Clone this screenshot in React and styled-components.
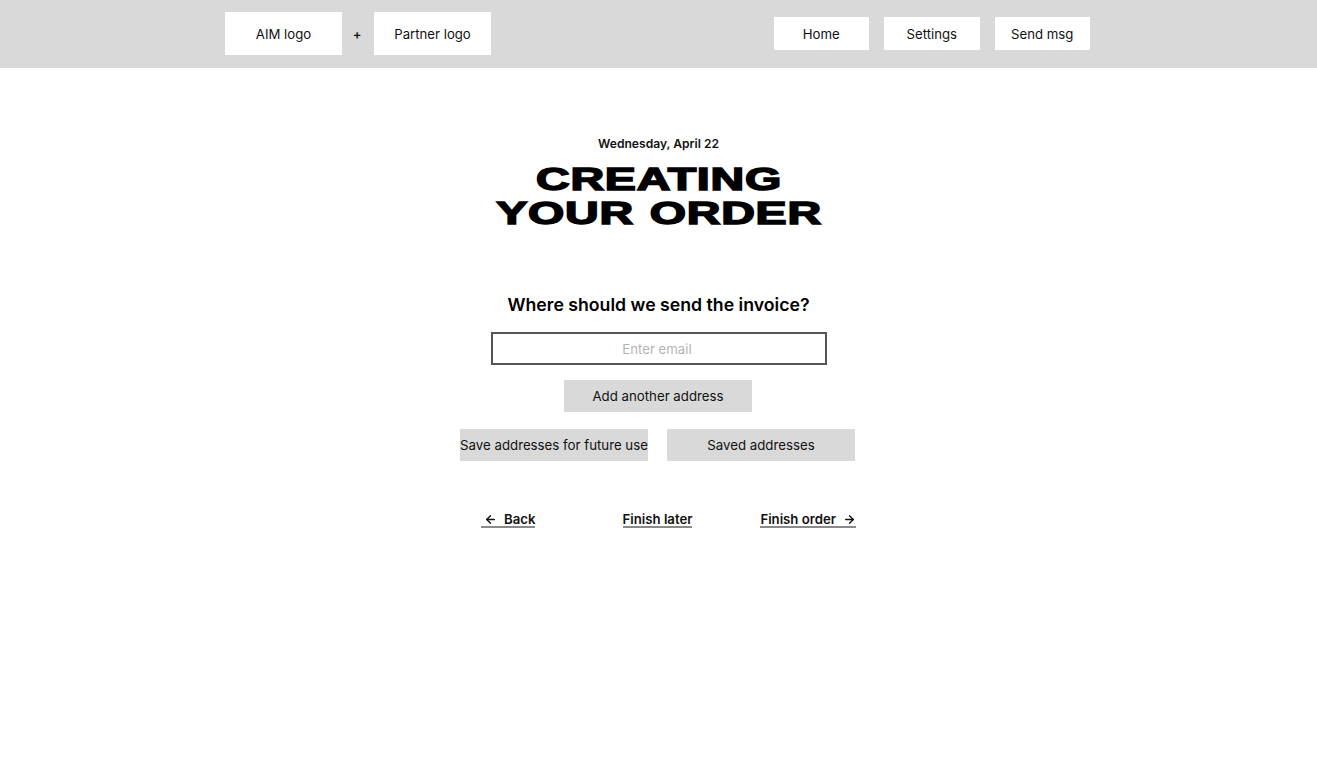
import React from 'react';
import styled, { createGlobalStyle } from 'styled-components';
import { ArrowLeft, ArrowRight } from 'lucide-react';

const GlobalStyle = createGlobalStyle`
  html, body {
    margin: 0;
    padding: 0;
    background: #fff;
    color: #111;
    font-family: Inter, "Liberation Sans", sans-serif;
  }
`;

const Header = styled.header`
  box-sizing: border-box;
  display: flex;
  justify-content: space-between;
  align-items: center;
  height: 68px;
  padding: 0 227px 1px 225px;
  background-color: #d9d9d9;
`;

const LogoGroup = styled.div`
  display: flex;
  align-items: center;
`;

const LogoBox = styled.div`
  display: flex;
  justify-content: center;
  align-items: center;
  width: 117px;
  height: 43px;
  background-color: #fff;
  font-size: 13.2px;
`;

const Plus = styled.span`
  width: 32px;
  padding-right: 2px;
  box-sizing: border-box;
  text-align: center;
  font-size: 13px;
  font-weight: 600;
`;

const Nav = styled.nav`
  display: flex;
  gap: 15px;
`;

const NavButton = styled.div`
  display: flex;
  justify-content: center;
  align-items: center;
  width: 95.5px;
  height: 33px;
  background-color: #fff;
  font-size: 13.2px;
`;

const Main = styled.main`
  display: flex;
  flex-direction: column;
  align-items: center;
  padding: 68px 0 0 0;
`;

const DateLine = styled.div`
  font-size: 12.1px;
  font-weight: 600;
  line-height: 16px;
`;

const Title = styled.h1`
  margin: 10px 0 0 2px;
  font-family: "Liberation Sans", Arial, sans-serif;
  font-size: 31.5px;
  font-weight: 700;
  line-height: 34px;
  letter-spacing: 0.5px;
  word-spacing: 1.5px;
  text-align: center;
  color: #000;
  white-space: nowrap;
  -webkit-text-stroke: 1.5px #000;
  transform: scaleX(1.48);
`;

const Form = styled.section`
  display: flex;
  flex-direction: column;
  align-items: center;
  padding-right: 1px;
`;

const Question = styled.h2`
  margin: 63px 0 0;
  padding-left: 1px;
  font-size: 17.7px;
  font-weight: 600;
  line-height: 24px;
  color: #000;
`;

const EmailInput = styled.input`
  box-sizing: border-box;
  width: 336px;
  height: 33px;
  margin: 15px 0 0 1px;
  padding: 0 3px 0 0;
  border: 2px solid #555;
  background: #fff;
  font-family: inherit;
  font-size: 13.2px;
  text-align: center;
  outline: none;

  &::placeholder {
    color: #b4b4b4;
    opacity: 1;
  }
`;

const GreyButton = styled.button`
  box-sizing: border-box;
  width: 188px;
  height: 32px;
  padding: 0;
  border: none;
  background-color: #d9d9d9;
  color: #111;
  font-family: inherit;
  font-size: 13.25px;
  white-space: nowrap;
`;

const AddButton = styled(GreyButton)`
  margin-top: 15px;
`;

const ButtonRow = styled.div`
  display: flex;
  gap: 19px;
  margin: 17px 0 0 -1px;
`;

const LinkRow = styled.div`
  display: grid;
  grid-template-columns: 1fr auto 1fr;
  width: 395px;
  margin: 51px 0 0 -1px;
`;

const TextLink = styled.a`
  display: inline-flex;
  align-items: center;
  gap: ${(p) => p.$gap || 0}px;
  height: 14px;
  padding: 0 ${(p) => p.$padRight || 0}px 0 ${(p) => p.$padLeft || 0}px;
  border-bottom: 2px solid #8a8a8a;
  font-size: 13.2px;
  font-weight: 600;
  line-height: 15px;
  color: #111;
  justify-self: ${(p) => p.$align || 'center'};
  margin-left: ${(p) => p.$offsetLeft || 0}px;
  margin-right: ${(p) => p.$offsetRight || 0}px;
`;

export default function App() {
  return (
    <>
      <GlobalStyle />
      <Header>
        <LogoGroup>
          <LogoBox>AIM logo</LogoBox>
          <Plus>+</Plus>
          <LogoBox>Partner logo</LogoBox>
        </LogoGroup>
        <Nav>
          <NavButton>Home</NavButton>
          <NavButton>Settings</NavButton>
          <NavButton>Send msg</NavButton>
        </Nav>
      </Header>
      <Main>
        <DateLine>Wednesday, April 22</DateLine>
        <Title>
          CREATING
          <br />
          YOUR ORDER
        </Title>
        <Form>
          <Question>Where should we send the invoice?</Question>
          <EmailInput placeholder="Enter email" />
          <AddButton>Add another address</AddButton>
          <ButtonRow>
            <GreyButton>Save addresses for future use</GreyButton>
            <GreyButton>Saved addresses</GreyButton>
          </ButtonRow>
          <LinkRow>
            <TextLink $align="start" $offsetLeft={21} $gap={7} $padLeft={3}>
              <ArrowLeft size={13} strokeWidth={2.5} />
              Back
            </TextLink>
            <TextLink>Finish later</TextLink>
            <TextLink $align="end" $offsetRight={-1} $gap={7}>
              Finish order
              <ArrowRight size={13} strokeWidth={2.5} />
            </TextLink>
          </LinkRow>
        </Form>
      </Main>
    </>
  );
}
